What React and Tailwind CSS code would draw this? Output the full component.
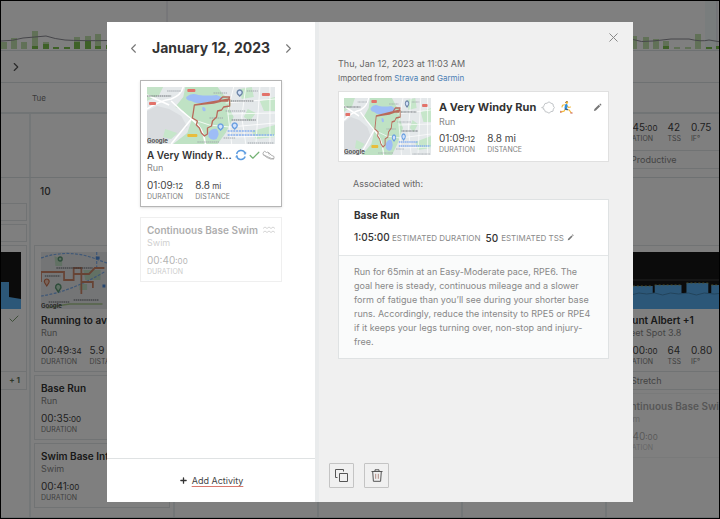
import { ChevronLeft, ChevronRight, X, Check, Plus } from "lucide-react";

function MapFrame({ className = "", children }) {
  return (
    <div className={"relative h-[57px] overflow-hidden " + className}>
      <svg viewBox="0 0 127 57" preserveAspectRatio="none" className="block h-full w-full" aria-label="Route map">
        {children}
      </svg>
      <span className="absolute bottom-0 left-0 text-[6px] leading-[7px] font-bold text-[#555]">Google</span>
    </div>
  );
}

function ParkMap({ className }) {
  return (
    <MapFrame className={className}>
      <rect width="127" height="57" fill="#e4e8ea" />
      <path d="M0 24L10 19L22 22L34 29L40 40L28 49L14 57H0Z" fill="#d9dcdf" />
      <path d="M0 0H16L12 8L0 14Z" fill="#c4e3c8" />
      <path d="M38 0H70L76 8L84 13L82 22L86 30L78 46L70 57H26L40 46L44 34L36 24L28 20L36 10Z" fill="#bfe2c4" />
      <path d="M92 2L104 0L106 10L94 12ZM112 14L127 10V24L116 24ZM100 22L108 26L102 34L96 30ZM104 44L127 38V50L108 52ZM18 42L30 46L24 52L16 50Z" fill="#c6e6ca" />
      <path d="M39 10Q44 5 51 8Q60 9 69 8L76 11Q70 16 60 15Q50 18 44 14Q38 13 39 10Z" fill="#9ebdf6" />
      <path d="M61 46Q64 41 69 42Q73 46 69 52Q64 54 61 50ZM55 20Q59 20 58 24Q54 25 55 20Z" fill="#9ebdf6" />
      <g fill="none" stroke="#fff" strokeWidth="1.6">
        <path d="M0 22Q12 14 24 12Q34 8 36 0" />
        <path d="M24 14Q34 24 44 32Q56 40 58 57" />
        <path d="M0 8L22 18M44 32Q36 42 24 57" />
        <path d="M86 0L80 24L84 57M98 0L94 30L98 57M112 0L108 57M122 0V57M78 16L127 12M80 27L127 26M82 40L127 36M82 50L127 49M44 32L62 38L82 40" strokeWidth="0.8" />
      </g>
      <g stroke="#70757a" strokeWidth="1.1" strokeDasharray="1.6 .5">
        <path d="M0 9H24M83 14H106M84 33H108" />
      </g>
      <path d="M20 4H34M99 4H110M78 24H98M62 31H76M76 51H88M50 55H72M100 56H126M66 6H80" stroke="#9aa0a6" strokeWidth="0.9" strokeDasharray="1.4 .6" />
      <path d="M80 44H108M80 48H126" stroke="#86aef0" strokeWidth="1.6" strokeDasharray="2 .8" />
      <g fill="#e2726a">
        <rect x="40" y="2" width="8" height="3" rx="1" />
        <rect x="2" y="15" width="7" height="3" rx="1" />
        <rect x="114" y="6" width="8" height="3" rx="1" />
      </g>
      <rect x="40" y="47" width="10" height="3" rx="1" fill="#e8bd3c" />
      <path d="M47 18L56 17L66 16L74 14L80 14L82 10L75 10L71 14M82 12L82 19L76 20L74 23L70 24L69 30L65 34L64 39L60 41L60 47L57 49L54 46L52 41L49 38L50 34L45 31L46 25L47 18Z" fill="none" stroke="#b9695b" strokeWidth="1.3" strokeLinejoin="round" />
      <g fill="#d3e2fb" strokeWidth="1.4">
        <path d="M92 3A2.500 2.500 0 0 1 94 7L92 9L90 7A2.500 2.500 0 0 1 92 3Z" stroke="#6f87a8" />
        <path d="M73 37A2.500 2.500 0 0 1 75 41L73 43L71 41A2.500 2.500 0 0 1 73 37ZM87 36A2.500 2.500 0 0 1 89 40L87 42L85 40A2.500 2.500 0 0 1 87 36Z" stroke="#6aa0e0" />
      </g>
    </MapFrame>
  );
}

function TownMap() {
  return (
    <MapFrame>
      <rect width="127" height="57" fill="#e8eaec" />
      <path d="M44 18H62V28H46ZM14 4L22 8V14H15ZM40 32H48V38H40Z" fill="#c4e3c8" />
      <path d="M0 6Q30 -4 60 8T127 6M58 0V16M0 44Q30 40 66 20" fill="none" stroke="#7fb0ee" strokeWidth="1.2" strokeDasharray="3 1.5" />
      <path d="M0 30V20H24V28H34V16H42V30H54V36M34 22H50L56 16H66M42 30V42" fill="none" stroke="#cf8668" strokeWidth="1.8" />
      <path d="M16 16H54M4 24H20M8 50H30M34 48H60" stroke="#5f6368" strokeWidth="1.2" strokeDasharray="1.600 .6" />
      <path d="M6 56L16 54L30 52H64" fill="none" stroke="#a9c88e" strokeWidth="1.4" />
      <path d="M6 27A2.500 2.500 0 0 1 8 31L6 34L4 31A2.500 2.500 0 0 1 6 27Z" fill="#f3c9b4" stroke="#c9714c" strokeWidth="1.2" />
      <path d="M18 32A3 3 0 0 1 20 37L18 40L16 37A3 3 0 0 1 18 32ZM20 5A1.500 1.500 0 0 1 20 9A1.500 1.500 0 0 1 20 5Z" fill="#bfe0c9" stroke="#5e9a76" strokeWidth="1.4" />
      <path d="M57 6H61M64 34H67" stroke="#4f8ee0" strokeWidth="3" />
    </MapFrame>
  );
}

function Stat({ value, small, label }) {
  return (
    <div>
      <div className="text-[10px] leading-3 whitespace-nowrap text-[#444]">
        {value}
        <span className="text-[8px]">{small}</span>
      </div>
      <div className="text-[7px] leading-[10px] text-[#808080]">{label}</div>
    </div>
  );
}

function Activity({ title, sport, stats, icons, media, footer, className = "border-[#e2e6e8]", gap = "gap-2" }) {
  return (
    <article className={"border bg-white " + className}>
      <div className="px-[6px] pt-[5px] pb-1">
        {media && <div className="mb-1 pt-px">{media}</div>}
        <div className="flex items-center justify-between">
          <h3 className="text-[10px] leading-[14px] font-semibold whitespace-nowrap text-[#333]">{title}</h3>
          {icons}
        </div>
        <p className="text-[9px] leading-[11px] text-[#888]">{sport}</p>
        <div className={"mt-[6px] flex " + gap}>
          {stats.map((s) => (
            <Stat key={s.label} {...s} />
          ))}
        </div>
      </div>
      {footer}
    </article>
  );
}

function WorkoutChart() {
  return (
    <svg viewBox="0 0 128 57" preserveAspectRatio="none" className="block h-[57px] w-full bg-[#161616]" aria-label="Workout profile">
      <path d="M0 28H128" stroke="#444" />
      <path d="M0 57V34H36V41H38V33H65V41H70V31H92V41H95V33H128V57Z" fill="#58aef0" />
      <path d="M0 42L8 41L14 43L22 41L30 42L38 41L46 43L54 41L62 42L72 41L80 43L88 41L98 42L108 41L128 42" fill="none" stroke="#4488b8" />
      <path d="M0 34H36M38 33H65M70 31H92M95 33H128" stroke="#9a9a50" strokeDasharray="2 2" />
    </svg>
  );
}

const bars = [
  [0, 7, 0], [10, 11, 0], [20, 7, 0], [31, 18, 3], [42, 7, 5], [52, 2, 2], [63, 2, 2], [73, 12, 7], [84, 13, 8], [94, 15, 3], [105, 4, 4],
  [630, 13, 0], [642, 12, 0], [652, 10, 0], [662, 8, 3], [673, 2, 0], [684, 2, 0], [694, 15, 0], [705, 2, 2], [715, 3, 3],
];

function LoadChart() {
  return (
    <svg width="720" height="49" viewBox="0 0 720 49" className="block shrink-0" aria-label="Training load">
      <rect x="704" width="12" height="49" fill="#f2fafb" />
      <path d="M166 0V49M716 0V49" stroke="#dcdce6" />
      {bars.map(([x, h, d]) => (
        <g key={x}>
          <rect x={x} y={48 - h} width="6" height={h} fill="#c3e2ae" />
          <rect x={x} y={48 - d} width="6" height={d} fill="#7cc24e" />
        </g>
      ))}
      <path d="M0 40Q12 40 22 37Q34 36 45 35Q54 38 64 39Q80 40 108 39.500M630 38Q640 42 652 40Q670 37 688 38Q700 41 708 39Q714 40 720 41" fill="none" stroke="#8c8c94" />
    </svg>
  );
}

function SmallNote({ children }) {
  return <div className="border-t border-[#e2e6e8] pl-5 text-[9px] leading-[17px] text-[#888]">{children}</div>;
}

const column = "shrink-0 border-r-2 border-[#e9eef0]";

function Calendar() {
  return (
    <div className="flex h-full flex-col overflow-hidden bg-white">
      <div className="overflow-hidden border-b border-[#dde3e5]">
        <LoadChart />
      </div>
      <div className="flex h-8 items-center border-b border-[#dde3e5] pl-2">
        <button aria-label="Next week">
          <ChevronRight size={14} className="text-[#555]" />
        </button>
      </div>
      <div className="flex h-[31px] items-center border-b-2 border-[#e3e8ea] pl-[31px] text-[8px] text-[#777]">Tue</div>

      <div className="flex h-16 shrink-0 border-b border-[#dde3e5]">
        <div className={column + " w-[30px]"} />
        <div className={column + " w-36"} />
        <div className={column + " w-36"} />
        <div className={column + " w-36"} />
        <div className={column + " w-36"} />
        <div className="w-36 shrink-0 pt-[7px] pl-[3px]">
          <div className="border-x border-b border-[#e2e6e8]">
            <div className="flex gap-[10px] px-[6px] pb-[6px]">
              <Stat value="00:45" small=":00" label="DURATION" />
              <Stat value="42" label="TSS" />
              <Stat value="0.75" label="IF°" />
            </div>
            <SmallNote>Productive</SmallNote>
          </div>
        </div>
      </div>

      <div className="flex min-h-0 flex-1 border-b border-[#dde3e5]">
        <div className={column + " flex w-[30px] flex-col gap-[3px] pt-[25px] pr-[2px]"}>
          <div className="h-[18px] border-y border-r border-[#e2e6e8]" />
          <div className="h-[18px] border-y border-r border-[#e2e6e8]" />
          <div className="flex h-[145px] flex-col border-y border-r border-[#e2e6e8] pt-[6px]">
            <svg viewBox="0 0 20 57" className="block h-[57px] w-5 shrink-0 bg-[#161616]" aria-label="Workout profile">
              <path d="M0 57V30H8V45L20 47V57Z" fill="#58aef0" />
            </svg>
            <Check size={12} className="mt-1 mr-[6px] shrink-0 self-end text-[#7d9c70]" />
            <div className="mt-auto border-t border-[#e2e6e8] pr-[6px] text-right text-[8px] leading-[17px] font-bold text-[#5d7051]">+ 1</div>
          </div>
        </div>
        <div className={column + " w-36 px-[3px]"}>
          <div className="h-[67px] pt-[6px] pl-[6px] text-[10px] leading-[14px] font-medium text-[#444]">10</div>
          <div className="flex flex-col gap-[3px]">
            <Activity
              media={<TownMap />}
              title="Running to avoid"
              sport="Run"
              stats={[{ value: "00:49", small: ":34", label: "DURATION" }, { value: "5.9", small: " mi", label: "DISTANCE" }]}
            />
            <Activity title="Base Run" sport="Run" stats={[{ value: "00:35", small: ":00", label: "DURATION" }]} />
            <Activity title="Swim Base Intervals" sport="Swim" stats={[{ value: "00:41", small: ":00", label: "DURATION" }]} />
          </div>
        </div>
        <div className={column + " w-36"} />
        <div className={column + " w-36"} />
        <div className={column + " w-36"} />
        <div className="flex w-36 shrink-0 flex-col gap-[3px] pt-[67px] pl-[3px]">
          <Activity
            gap="gap-[10px]"
            media={<WorkoutChart />}
            title="Mount Albert +1"
            sport="Sweet Spot 3.8"
            stats={[{ value: "00:00", small: ":00", label: "DURATION" }, { value: "64", label: "TSS" }, { value: "0.80", label: "IF°" }]}
            footer={<SmallNote>Stretch</SmallNote>}
          />
          <Activity
            className="border-[#e2e6e8] opacity-40"
            title="Continuous Base Swim"
            sport="Swim"
            stats={[{ value: "00:40", small: ":00", label: "DURATION" }]}
          />
        </div>
      </div>
    </div>
  );
}

function Pencil({ size }) {
  return (
    <svg width={size} height={size} viewBox="0 0 10 10" fill="#777" aria-hidden="true">
      <path d="M1 9L1.600 6.800L6.400 2L8 3.600L3.200 8.400ZM7 1.400L7.600 .8Q8 .5 8.400 .8L9.200 1.600Q9.500 2 9.200 2.400L8.600 3Z" />
    </svg>
  );
}

function Waves() {
  return (
    <svg width="12" height="8" viewBox="0 0 12 8" fill="none" stroke="#999" className="shrink-0" aria-hidden="true">
      <path d="M0 2.500L2 1L4 2.500L6 1L8 2.500L10 1L12 2.500M0 6.500L2 5L4 6.500L6 5L8 6.500L10 5L12 6.500" />
    </svg>
  );
}

function Shoe() {
  return (
    <svg width="13" height="10" viewBox="0 0 13 10" fill="none" stroke="#aaa" strokeWidth="0.9" strokeLinejoin="round" aria-hidden="true">
      <path d="M1 3L2.500 1.200L4.500 2.500L6 2L9 5L12 6.500V8.500H9.500L5 6.500L1 4.500ZM1 4.500L5 7.500L8.500 9H12M6 4L7.500 3.200M7.500 5L8.500 4.200" />
    </svg>
  );
}

function SyncRing() {
  return (
    <svg width="12" height="12" viewBox="0 0 12 12" fill="none" stroke="#5b9be0" strokeWidth="1.400" aria-hidden="true">
      <path d="M1.600 5A4.500 4.500 0 0 1 10.200 4.400M10.200 7.600A4.500 4.500 0 0 1 1.600 7" />
      <path d="M10.700 2.800V5H8.800M.8 8.400L1.500 6.500L3 7.400" strokeWidth="0.9" />
    </svg>
  );
}

function WindHead() {
  return (
    <svg width="14" height="13" viewBox="0 0 14 13" fill="none" stroke="#c2c5c8" strokeLinejoin="round" aria-hidden="true">
      <path d="M3 4.500L4 2.500L6 2.200L8 .8L10 2.200L12 3L12.300 5L13.400 6.500L12.300 8.200L12 10.200L10 10.600L8 12.200L6 11L4.300 10.800L3.600 8.800" />
      <path d="M3.600 8.800L2.400 8.400L2.800 7.200L.6 6.600L2.600 5.800L3 4.500" />
    </svg>
  );
}

function Runner() {
  return (
    <svg width="13" height="13" viewBox="0 0 13 13" fill="none" strokeLinecap="round" strokeLinejoin="round" aria-hidden="true">
      <path d="M4.500 3.800L2.500 4.300L2 6M7 5L8.500 6.500L10.500 6" stroke="#f2b93b" strokeWidth="1.1" />
      <path d="M5.200 8.200L4 10.200L1.200 10.800M6.800 8.500L9.200 9L11 11.500" stroke="#f2b93b" strokeWidth="1.2" />
      <path d="M6.300 4.200L5.800 6.800" stroke="#2e8fdb" strokeWidth="2.600" />
      <path d="M5.400 8L7.200 8.500" stroke="#2b5f94" strokeWidth="1.600" />
      <circle cx="6.800" cy="1.600" r="1.300" fill="#f2b93b" />
      <path d="M5.500 1.300Q6 .4 7.200 .5" stroke="#6a4a2c" strokeWidth="0.8" />
      <path d="M.8 10.200V11.500M10.800 12H12.200" stroke="#c0473a" strokeWidth="0.9" />
    </svg>
  );
}

function Duplicate() {
  return (
    <svg width="13" height="13" viewBox="0 0 13 13" fill="none" stroke="#555" aria-hidden="true">
      <path d="M4.500 4.500H12.500V12.500H4.500ZM2.500 8.500H.5V.5H8.500V2.500" />
    </svg>
  );
}

function TrashCan() {
  return (
    <svg width="12" height="13" viewBox="0 0 12 13" fill="none" stroke="#555" aria-hidden="true">
      <path d="M.5 2.500H11.500M4 2.500V.8H8V2.500M1.700 2.500L2.400 12.300H9.600L10.300 2.500" />
      <path d="M4.700 4.800V9.800M7.300 4.800V9.800" stroke="#b08d84" />
    </svg>
  );
}

function DayPane() {
  return (
    <section className="flex w-[208px] shrink-0 flex-col bg-white">
      <header className="flex h-[58px] items-start justify-between px-[19px] pt-[14px]">
        <button aria-label="Previous day" className="flex h-6 items-center">
          <ChevronLeft size={15} strokeWidth={1.8} className="text-[#777]" />
        </button>
        <h1 className="text-[14px] leading-6 font-bold text-[#333]">January 12, 2023</h1>
        <button aria-label="Next day" className="flex h-6 items-center">
          <ChevronRight size={15} strokeWidth={1.8} className="text-[#777]" />
        </button>
      </header>
      <div className="flex flex-1 flex-col gap-[10px] px-[33px]">
        <Activity
          className="border-[#b5b5b5] shadow-sm"
          gap="gap-3"
          media={<ParkMap />}
          title="A Very Windy R..."
          sport="Run"
          icons={
            <span className="flex shrink-0 items-center gap-px">
              <SyncRing />
              <Check size={13} strokeWidth={2.2} className="text-[#74b274]" />
              <Shoe />
            </span>
          }
          stats={[{ value: "01:09", small: ":12", label: "DURATION" }, { value: "8.8", small: " mi", label: "DISTANCE" }]}
        />
        <Activity
          className="border-[#d8d8d8] opacity-40"
          title="Continuous Base Swim"
          sport="Swim"
          icons={<Waves />}
          stats={[{ value: "00:40", small: ":00", label: "DURATION" }]}
        />
      </div>
      <footer className="flex h-11 items-center justify-center border-t border-[#dfe2e3]">
        <button className="flex items-center gap-1 text-[9px] text-[#444]">
          <Plus size={9} strokeWidth={3.5} className="text-[#333]" />
          <span className="underline decoration-[#d9776c] underline-offset-2">Add Activity</span>
        </button>
      </footer>
    </section>
  );
}

function DetailPane() {
  return (
    <section className="flex min-w-0 flex-1 flex-col border-l-4 border-[#e9ebec] bg-[#f0f0f0]">
      <div className="flex h-[30px] items-center justify-end pr-3">
        <button aria-label="Close">
          <X size={15} strokeWidth={1.6} className="text-[#888]" />
        </button>
      </div>
      <div className="flex-1 pt-[5px] pr-6 pl-[19px]">
        <p className="text-[9px] leading-[14px] text-[#666]">Thu, Jan 12, 2023 at 11:03 AM</p>
        <p className="text-[8px] leading-[14px] text-[#666]">
          Imported from <a href="#strava" className="text-[#4a7fb5]">Strava</a> and <a href="#garmin" className="text-[#4a7fb5]">Garmin</a>
        </p>

        <article className="mt-[6px] flex gap-[8px] border border-[#e0e0e0] bg-white p-[6px] pl-[5px]">
          <ParkMap className="w-[87px] shrink-0" />
          <div className="min-w-0 flex-1">
            <div className="flex items-center gap-[5px]">
              <h2 className="text-[11px] leading-[18px] font-bold whitespace-nowrap text-[#333]">A Very Windy Run</h2>
              <WindHead />
              <Runner />
              <button aria-label="Edit activity" className="ml-auto">
                <Pencil size={9} />
              </button>
            </div>
            <p className="text-[9px] leading-[11px] text-[#888]">Run</p>
            <div className="mt-[5px] flex gap-3">
              <Stat value="01:09" small=":12" label="DURATION" />
              <Stat value="8.8 mi" label="DISTANCE" />
            </div>
          </div>
        </article>

        <p className="mt-[15px] pl-[15px] text-[9px] leading-[14px] text-[#666]">Associated with:</p>

        <article className="mt-2 border border-[#dfe2e3] bg-white">
          <div className="px-[15px] pt-2 pb-[10px]">
            <h2 className="text-[10px] leading-[14px] font-bold text-[#333]">Base Run</h2>
            <div className="mt-2 flex items-center gap-[5px] text-[8px] leading-[14px] text-[#8a8a8a]">
              <span className="whitespace-nowrap">
                <span className="text-[10px] font-medium text-[#333]">1:05:00</span> ESTIMATED DURATION
              </span>
              <span className="flex items-center gap-[3px] whitespace-nowrap">
                <span className="text-[10px] font-medium text-[#333]">50</span> ESTIMATED TSS
                <button aria-label="Edit estimated TSS">
                  <Pencil size={7} />
                </button>
              </span>
            </div>
          </div>
          <p className="border-t border-[#e3e6e7] bg-[#fafbfb] px-[15px] py-[9px] text-[9px] leading-[14px] text-[#888]">
            Run for 65min at an Easy-Moderate pace, RPE6. The goal here is steady, continuous mileage and a slower form of fatigue than you’ll see during your shorter base runs. Accordingly, reduce the intensity to RPE5 or RPE4 if it keeps your legs turning over, non-stop and injury-free.
          </p>
        </article>
      </div>
      <footer className="flex gap-[10px] pb-[14px] pl-[10px]">
        <button aria-label="Duplicate" className="flex size-[25px] items-center justify-center rounded-[1px] border border-[#c4c4c4]">
          <Duplicate />
        </button>
        <button aria-label="Delete" className="flex size-[25px] items-center justify-center rounded-[1px] border border-[#c4c4c4]">
          <TrashCan />
        </button>
      </footer>
    </section>
  );
}

export default function App() {
  return (
    <main className="relative h-screen min-h-[519px] overflow-hidden border border-black bg-white font-['Inter','Liberation_Sans',sans-serif]">
      <Calendar />
      <div className="absolute inset-0 flex bg-black/50 pt-[21px] pr-[86px] pb-4 pl-[106px]">
        <div role="dialog" aria-modal="true" aria-label="Activities on January 12, 2023" className="flex min-w-0 flex-1">
          <DayPane />
          <DetailPane />
        </div>
      </div>
    </main>
  );
}
